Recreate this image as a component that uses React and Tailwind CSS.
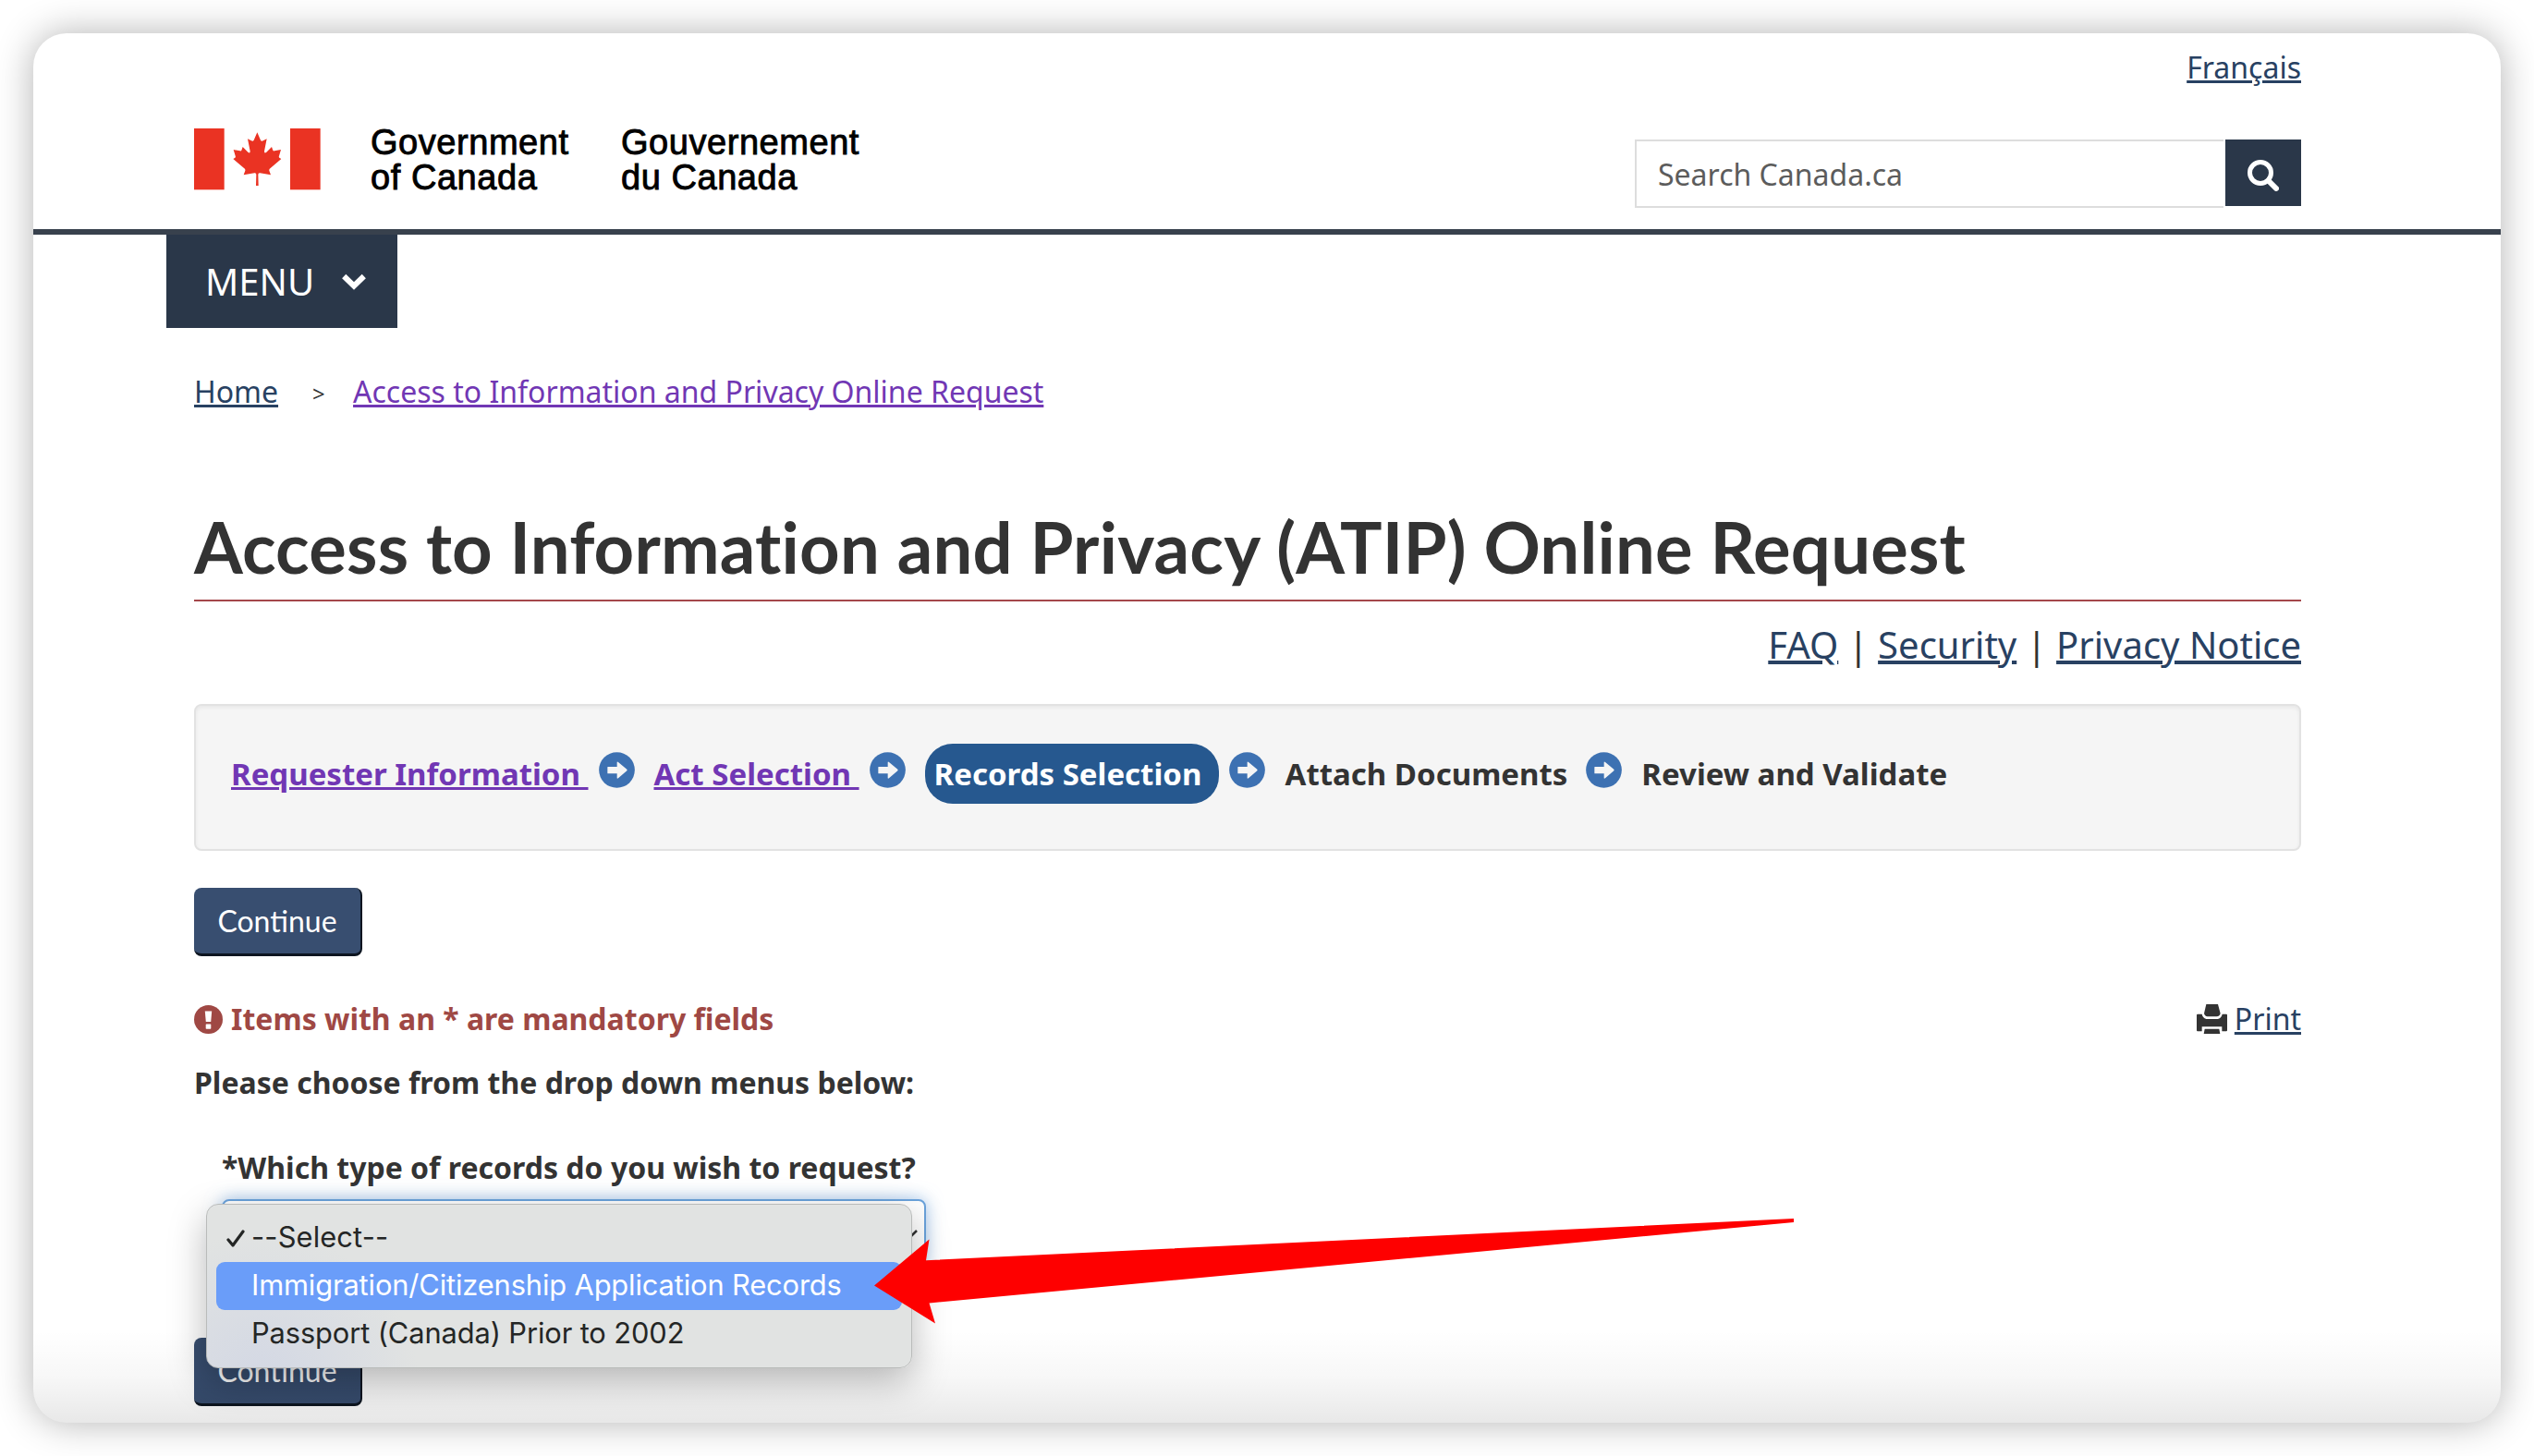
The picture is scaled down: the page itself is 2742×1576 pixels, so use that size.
import React from 'react';

const link = 'underline decoration-[3px] underline-offset-[2px]';

function CanadaFlag() {
  return (
    <svg width="137" height="67" viewBox="0 0 411 201" fill="#ea3323">
      <rect x="0" y="0" width="98" height="199" />
      <rect x="312" y="0" width="98" height="199" />
      <path d="M205 13L194 38Q191 43 186 40L174 34L182 74Q182 83 175 77L158 60L154 71Q153 74 149 73L128 69L134 89Q136 94 132 96L127 99L163 130Q167 133 166 137L161 151L196 145Q202 144 202 150L201 186H209L208 150Q208 144 214 145L249 151L244 137Q243 133 247 130L283 99L278 96Q274 94 276 89L282 69L261 73Q257 74 256 71L252 60L235 77Q228 83 228 74L236 34L224 40Q219 43 216 38Z" />
    </svg>
  );
}

function SearchIcon() {
  return (
    <svg width="34" height="34" viewBox="0 0 34 34" fill="none" stroke="#fff">
      <circle cx="14" cy="14" r="11.5" strokeWidth="5" />
      <path d="M22.5 22.5L31 31" strokeWidth="6" strokeLinecap="round" />
    </svg>
  );
}

function ArrowCircle({ className = '' }) {
  return (
    <svg width="39" height="39" viewBox="0 0 117 117" className={`mb-[8px] shrink-0 ${className}`}>
      <circle cx="58.5" cy="58.5" r="58" fill="#3d71b2" />
      <path d="M29 48H59V34Q59 30 63 33L91 56Q93 59 91 61L63 85Q59 88 59 84V70H29Q28 70 28 68V50Q28 48 29 48Z" fill="#f5f5f5" />
    </svg>
  );
}

function AlertIcon() {
  return (
    <svg width="31" height="31" viewBox="0 0 31 31">
      <circle cx="15.5" cy="15.5" r="15.5" fill="#9f4844" />
      <path d="M11.8 6.5H19.2L18.2 18H12.8Z" fill="#fff" />
      <rect x="12.7" y="20.5" width="5.6" height="5.2" rx="0.6" fill="#fff" />
    </svg>
  );
}

function PrintIcon() {
  return (
    <svg width="33" height="33" viewBox="0 0 99 99" fill="#333">
      <path d="M31 0H69L77 30Q75 39 65 40H35Q26 39 24 30Z" />
      <path d="M3 32H17Q19 44 31 48H69Q81 44 83 32H96Q99 32 99 35V85Q99 88 96 88H82V73H17V88H3Q0 88 0 85V35Q0 32 3 32Z" />
      <path d="M26 80H73L76 96H23Z" />
    </svg>
  );
}

function ContinueButton() {
  return (
    <button className="flex h-[74px] w-[182px] items-center justify-center rounded-[8px] border-r-2 border-b-[3px] border-[#0d1520] bg-[#384e70] font-['Lato',sans-serif] text-[32px] leading-[40px] text-white">
      Continue
    </button>
  );
}

function Header() {
  return (
    <header className="h-[218px] border-b-[6px] border-[#38414d] pt-[17px] pr-[216px] pl-[174px]">
      <div className="flex justify-end leading-[40px]">
        <a className={`${link} text-[#284162]`}>Français</a>
      </div>
      <div className="flex items-start justify-between">
        <div className="mt-[46px] flex font-['Liberation_Sans',Arial,sans-serif] text-[38px] leading-[38px] tracking-[0.55px] text-black [-webkit-text-stroke:0.9px_#000]">
          <CanadaFlag />
          <div className="-mt-[4px] ml-[54px] w-[271px]">
            <p>Government</p>
            <p>of Canada</p>
          </div>
          <div className="-mt-[4px]">
            <p>Gouvernement</p>
            <p>du Canada</p>
          </div>
        </div>
        <div className="mt-[58px] flex gap-[2px]">
          <div className="h-[74px] w-[637px] border-2 border-r-0 border-[#ddd] pl-[23px] leading-[72px] text-[#5c5c5c]">
            Search Canada.ca
          </div>
          <button className="flex h-[72px] w-[82px] items-center justify-center bg-[#2a3749] pt-[5px]">
            <SearchIcon />
          </button>
        </div>
      </div>
    </header>
  );
}

function Steps() {
  return (
    <div className="mt-[39px] flex h-[159px] items-start rounded-[8px] border-2 border-[#e2e2e2] bg-[#f5f5f5] pt-[41px] pl-[38px] text-[33px] leading-[40px] font-bold whitespace-pre shadow-[inset_0_2px_4px_rgba(0,0,0,0.06)]">
      <div className="flex h-[65px] items-center">
        <a className={`${link} text-[#7137b4]`}>Requester Information </a>
        <ArrowCircle className="mr-[21px] ml-[11px]" />
        <a className={`${link} text-[#7137b4]`}>Act Selection </a>
        <ArrowCircle className="mr-[21px] ml-[11px]" />
        <span className="flex h-[65px] w-[318px] items-center rounded-[30px] bg-[#26588f] pl-[10px] text-white">
          Records Selection
        </span>
        <ArrowCircle className="mr-[22px] ml-[11px]" />
        <span>Attach Documents</span>
        <ArrowCircle className="mr-[21px] ml-[20px]" />
        <span>Review and Validate</span>
      </div>
    </div>
  );
}

function RecordTypeSelect() {
  return (
    <div className="relative mt-[14px] ml-[30px] h-[74px] w-[762px] rounded-[8px] border-2 border-[#6ba3dc] bg-white shadow-[0_0_18px_rgba(102,160,225,0.6)]">
      <svg width="26" height="14" viewBox="0 0 26 14" className="absolute top-[31px] left-[725px]" fill="none" stroke="#333" strokeWidth="2.5">
        <path d="M1 1L13 13L25 1" />
      </svg>
      <ul className="absolute top-[3px] -left-[19px] z-20 h-[178px] w-[764px] rounded-[13px] border border-[#b9bbba] bg-[radial-gradient(circle_at_60px_200px,#d2d7e4,#e1e3e2_170px)] px-[10px] pt-[10px] font-['Inter',sans-serif] text-[30.8px] leading-[49px] text-[#242625] shadow-[0_14px_40px_rgba(0,0,0,0.28)]">
        <li className="flex h-[52px] pl-[11px]">
          <svg width="20" height="20" viewBox="0 0 20 20" className="mt-[17px] mr-[7px]" fill="none" stroke="#242625" strokeWidth="3.2" strokeLinecap="round" strokeLinejoin="round">
            <path d="M2 11L7 17L18 2" />
          </svg>
          <span className="tracking-[0.15px]">--Select--</span>
        </li>
        <li className="h-[52px] rounded-[9px] bg-[#6a9df9] pl-[38px] tracking-[-0.12px] text-white">
          Immigration/Citizenship Application Records
        </li>
        <li className="h-[52px] pl-[38px] tracking-[-0.1px]">Passport (Canada) Prior to 2002</li>
      </ul>
    </div>
  );
}

function App() {
  return (
    <div className="h-[1576px] w-[2742px] overflow-hidden bg-white p-9">
      <div className="relative h-[1504px] w-[2670px] overflow-clip rounded-[36px] bg-white font-['Noto_Sans',sans-serif] text-[32px] text-[#333] shadow-[0_0_40px_rgba(0,0,0,0.3)]">
        <Header />

        <nav className="ml-[144px] flex h-[101px] w-[250px] items-center bg-[#2a3749] pl-[42px] text-[40px] leading-[50px] text-white">
          MENU
          <svg width="26" height="18" viewBox="0 0 26 18" className="ml-[30px]" fill="none" stroke="#fff" strokeWidth="6">
            <path d="M2.2 3L13 13.5L23.8 3" />
          </svg>
        </nav>

        <main className="pr-[216px] pl-[174px]">
          <div className="mt-[49px] flex h-[40px] leading-[40px]">
            <a className={`${link} text-[#284162]`}>Home</a>
            <span className="ml-[37px] w-[44px] text-[24px] leading-[43px]">&gt;</span>
            <a className={`${link} text-[#7137b4]`}>Access to Information and Privacy Online Request</a>
          </div>

          <h1 className="mt-[103px] border-b-2 border-[#a4474a] pb-[12px] font-['Lato',sans-serif] text-[76px] leading-[90px] font-bold tracking-[0.2px]">
            Access to Information and Privacy (ATIP) Online Request
          </h1>

          <div className="mt-[22px] text-right text-[40px] leading-[50px]">
            <a className="text-[#284162] underline decoration-[4px] underline-offset-[2px]">FAQ</a>
            {' | '}
            <a className="text-[#284162] underline decoration-[4px] underline-offset-[2px]">Security</a>
            {' | '}
            <a className="text-[#284162] underline decoration-[4px] underline-offset-[2px]">Privacy Notice</a>
          </div>

          <Steps />

          <div className="mt-[40px]">
            <ContinueButton />
          </div>

          <div className="mt-[48px] flex h-[40px] items-center justify-between leading-[40px]">
            <p className="flex items-center gap-[9px] font-bold text-[#9f4844]">
              <AlertIcon />
              Items with an * are mandatory fields
            </p>
            <p className="flex items-center gap-[8px]">
              <PrintIcon />
              <a className={`${link} text-[#284162]`}>Print</a>
            </p>
          </div>

          <p className="mt-[29px] leading-[40px] font-bold">Please choose from the drop down menus below:</p>

          <p className="mt-[52px] ml-[30px] leading-[40px] font-bold">*Which type of records do you wish to request?</p>
          <RecordTypeSelect />

          <div className="mt-[76px]">
            <ContinueButton />
          </div>
        </main>

        {/* fade along the bottom edge of the window */}
        <div className="absolute bottom-0 left-0 z-10 h-[100px] w-full bg-linear-to-b from-black/0 via-black/3 to-black/9" />

        {/* callout arrow pointing at the highlighted option */}
        <svg width="1000" height="120" viewBox="943 1317 1000 120" className="absolute top-[1281px] left-[907px] z-30">
          <path d="M946 1391.5L1005.5 1341.5L1002 1364.3L1941 1319V1323L1005.5 1410.5L1012 1432.5Z" fill="#fe0000" />
        </svg>
      </div>
    </div>
  );
}

export default App;
